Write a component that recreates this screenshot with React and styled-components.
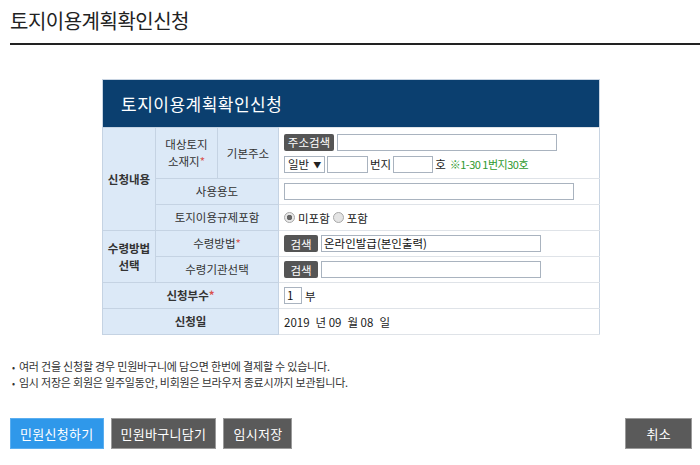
import React from 'react';
import styled, { createGlobalStyle } from 'styled-components';

const GlobalStyle = createGlobalStyle`
  html, body {
    margin: 0;
    padding: 0;
    background: #fff;
  }
  body {
    font-family: "Noto Sans CJK KR", "Noto Sans", sans-serif;
    color: #333;
    overflow: hidden;
  }
  * { box-sizing: border-box; }
`;

const Page = styled.div`
  width: 700px;
  height: 465px;
  padding: 0 0 0 10px;
  display: flex;
  flex-direction: column;
`;

const Title = styled.h1`
  margin: 0;
  padding: 8px 0 0 0;
  height: 45px;
  font-size: 20px;
  font-weight: 400;
  letter-spacing: -0.5px;
  color: #222;
  border-bottom: 2px solid #222;
  line-height: 26px;
`;

const FormWrap = styled.div`
  padding: 34px 0 0 92px;
`;

const Table = styled.table`
  width: 498px;
  border-collapse: collapse;
  table-layout: fixed;
  font-size: 11.5px;
  border: 1px solid #c8d4e2;
`;

const HeadCell = styled.th`
  background: #0b3f6f;
  color: #fff;
  height: 48px;
  text-align: left;
  padding: 0 0 0 18px;
  font-size: 17px;
  font-weight: 400;
  letter-spacing: 0.5px;
`;

const Label = styled.td`
  background: #dce9f7;
  border: 1px solid #c5d3e3;
  text-align: center;
  color: #333;
  height: ${p => p.$h || 26}px;
  font-weight: ${p => (p.$bold ? 700 : 400)};
  line-height: 17px;
  padding: 0;
`;

const Value = styled.td`
  border-top: 1px solid #dfe3e8;
  border-bottom: 1px solid #dfe3e8;
  padding: 0 0 0 5px;
  height: ${p => p.$h || 26}px;
  background: #fff;
  color: #222;
`;

const Line = styled.div`
  display: flex;
  align-items: center;
  gap: ${p => p.$gap || 3}px;
  height: ${p => p.$h || 20}px;
  white-space: nowrap;
`;

const Req = styled.span`
  color: #d9534f;
`;

const DarkBtn = styled.span`
  display: inline-flex;
  align-items: center;
  justify-content: center;
  background: #555;
  color: #fff;
  height: 17px;
  padding: 0;
  border-radius: 2px;
  font-size: 11.5px;
  white-space: nowrap;
  flex-shrink: 0;
  width: ${p => p.$w}px;
`;

const Input = styled.div`
  width: ${p => p.$w}px;
  height: 17px;
  border: 1px solid #a9b3bf;
  background: #fff;
  font-size: 11.5px;
  line-height: 15px;
  padding-left: 2px;
  color: #111;
  flex-shrink: 0;
`;

const Select = styled.div`
  width: 41px;
  height: 17px;
  border: 1px solid #a9b3bf;
  font-size: 11.5px;
  line-height: 15px;
  padding-left: 3px;
  display: flex;
  gap: 4px;
  align-items: center;
`;

const Arrow = styled.span`
  font-size: 8px;
`;

const Hint = styled.span`
  color: #2f9a2f;
  font-size: 11px;
  margin-left: 2px;
  letter-spacing: -0.5px;
`;

const Radio = styled.span`
  display: inline-block;
  width: 11px;
  height: 11px;
  border-radius: 50%;
  border: 1px solid #a8a8a8;
  background: radial-gradient(circle, ${p => (p.$on ? '#666 0 2.5px, #e8e8e8 3px' : '#e4e4e4 0, #e4e4e4 100%')});
`;

const Notes = styled.ul`
  list-style: none;
  margin: 24px 0 0 0;
  padding: 0 0 0 2px;
  font-size: 11px;
  color: #333;
  line-height: 15px;
  letter-spacing: -0.2px;
`;

const Note = styled.li`
  &::before {
    content: '•';
    margin-right: 4px;
    font-size: 9px;
  }
`;

const Actions = styled.div`
  margin-top: 27px;
  display: flex;
  gap: 7px;
  padding-right: 8px;
`;

const Btn = styled.button`
  height: 31px;
  padding: 0 ${p => p.$px || 9}px;
  border: 1px solid ${p => (p.$primary ? '#5aaef0' : '#9a9a9a')};
  background: ${p => (p.$primary ? '#2f98ea' : '#5a5a5a')};
  color: #fff;
  font-family: inherit;
  font-size: 13px;
  letter-spacing: 0.3px;
  cursor: pointer;
  margin-left: ${p => (p.$right ? 'auto' : '0')};
`;

export default function App() {
  return (
    <Page>
      <GlobalStyle />
      <Title>토지이용계획확인신청</Title>
      <FormWrap>
        <Table>
          <colgroup>
            <col style={{ width: 53 }} />
            <col style={{ width: 62 }} />
            <col style={{ width: 61 }} />
            <col />
          </colgroup>
          <thead>
            <tr>
              <HeadCell colSpan={4}>토지이용계획확인신청</HeadCell>
            </tr>
          </thead>
          <tbody>
            <tr>
              <Label rowSpan={3} $bold>신청내용</Label>
              <Label $h={51}>대상토지<br />소재지<Req>*</Req></Label>
              <Label $h={51}>기본주소</Label>
              <Value $h={51}>
                <Line $h={22}>
                  <DarkBtn $w={50}>주소검색</DarkBtn>
                  <Input $w={220} />
                </Line>
                <Line $h={22} $gap={2}>
                  <Select>일반 <Arrow>▼</Arrow></Select>
                  <Input $w={41} />
                  <span>번지</span>
                  <Input $w={40} />
                  <span>호</span>
                  <Hint>※1-30 1번지30호</Hint>
                </Line>
              </Value>
            </tr>
            <tr>
              <Label colSpan={2}>사용용도</Label>
              <Value>
                <Line><Input $w={290} /></Line>
              </Value>
            </tr>
            <tr>
              <Label colSpan={2}>토지이용규제포함</Label>
              <Value>
                <Line $gap={3}>
                  <Radio $on /> 미포함<Radio /> 포함
                </Line>
              </Value>
            </tr>
            <tr>
              <Label rowSpan={2} $bold>수령방법<br />선택</Label>
              <Label colSpan={2}>수령방법<Req>*</Req></Label>
              <Value>
                <Line>
                  <DarkBtn $w={34}>검색</DarkBtn>
                  <Input $w={220}>온라인발급(본인출력)</Input>
                </Line>
              </Value>
            </tr>
            <tr>
              <Label colSpan={2}>수령기관선택</Label>
              <Value>
                <Line>
                  <DarkBtn $w={34}>검색</DarkBtn>
                  <Input $w={220} />
                </Line>
              </Value>
            </tr>
            <tr>
              <Label colSpan={3} $bold>신청부수<Req>*</Req></Label>
              <Value>
                <Line>
                  <Input $w={18}>1</Input>
                  <span>부</span>
                </Line>
              </Value>
            </tr>
            <tr>
              <Label colSpan={3} $bold>신청일</Label>
              <Value>
                <Line $gap={6}>
                  <span>2019</span><span>년 09</span><span>월 08</span><span>일</span>
                </Line>
              </Value>
            </tr>
          </tbody>
        </Table>
      </FormWrap>
      <Notes>
        <Note>여러 건을 신청할 경우 민원바구니에 담으면 한번에 결제할 수 있습니다.</Note>
        <Note>임시 저장은 회원은 일주일동안, 비회원은 브라우저 종료시까지 보관됩니다.</Note>
      </Notes>
      <Actions>
        <Btn $primary>민원신청하기</Btn>
        <Btn>민원바구니담기</Btn>
        <Btn>임시저장</Btn>
        <Btn $right $px={20}>취소</Btn>
      </Actions>
    </Page>
  );
}
